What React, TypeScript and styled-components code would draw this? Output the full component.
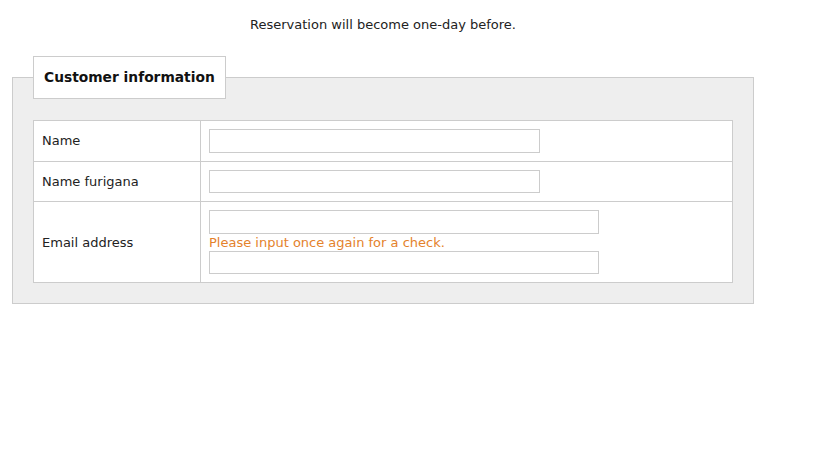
import React from "react";
import styled, { createGlobalStyle } from "styled-components";

const GlobalStyle = createGlobalStyle`
  html, body { margin: 0; padding: 0; background: #ffffff; }
  body {
    font-family: "DejaVu Sans", Verdana, sans-serif;
    font-size: 13px;
    color: #222222;
  }
  * { box-sizing: border-box; }
`;

const Page = styled.div`
  width: 742px;
  margin-left: 12px;
`;

const Notice = styled.p`
  margin: 0;
  padding: 16px 0 22px;
  line-height: 18px;
  text-align: center;
  font-size: 13px;
  color: #222222;
`;

const Fieldset = styled.fieldset`
  margin: 0;
  min-width: 0;
  width: 742px;
  padding: 20px;
  border: 1px solid #cccccc;
  background: #eeeeee;
`;

const Legend = styled.legend`
  height: 43px;
  padding: 0 10px;
  line-height: 41px;
  border: 1px solid #cccccc;
  background: #ffffff;
  font-size: 13.8px;
  font-weight: bold;
  color: #111111;
`;

const FormTable = styled.div`
  width: 700px;
  margin-top: 1px;
  border: 1px solid #cccccc;
  background: #ffffff;
`;

const Row = styled.div<{ $first?: boolean }>`
  display: grid;
  grid-template-columns: 167px 1fr;
  border-top: ${(p) => (p.$first ? "none" : "1px solid #cccccc")};
`;

const LabelCell = styled.div`
  display: flex;
  align-items: center;
  padding: 0 8px;
  border-right: 1px solid #cccccc;
  font-size: 13px;
  color: #222222;
`;

const ValueCell = styled.div`
  padding: 8px;
  display: flex;
  flex-direction: column;
  align-items: flex-start;
`;

const TextInput = styled.input<{ $width: number }>`
  display: block;
  width: ${(p) => p.$width}px;
  height: 23.5px;
  margin: 0;
  padding: 2px 4px;
  border: 1px solid #cccccc;
  background: #ffffff;
  font-family: "DejaVu Sans", Verdana, sans-serif;
  font-size: 13px;
  outline: none;
`;

const Hint = styled.span`
  display: block;
  line-height: 17px;
  font-size: 13px;
  color: #e4822b;
`;

export default function App() {
  return (
    <>
      <GlobalStyle />
      <Page>
        <Notice>Reservation will become one-day before.</Notice>
        <Fieldset>
          <Legend>Customer information</Legend>
          <FormTable>
            <Row $first>
              <LabelCell>Name</LabelCell>
              <ValueCell>
                <TextInput type="text" $width={331} />
              </ValueCell>
            </Row>
            <Row>
              <LabelCell>Name furigana</LabelCell>
              <ValueCell>
                <TextInput type="text" $width={331} />
              </ValueCell>
            </Row>
            <Row>
              <LabelCell>Email address</LabelCell>
              <ValueCell>
                <TextInput type="text" $width={390} />
                <Hint>Please input once again for a check.</Hint>
                <TextInput type="text" $width={390} />
              </ValueCell>
            </Row>
          </FormTable>
        </Fieldset>
      </Page>
    </>
  );
}
